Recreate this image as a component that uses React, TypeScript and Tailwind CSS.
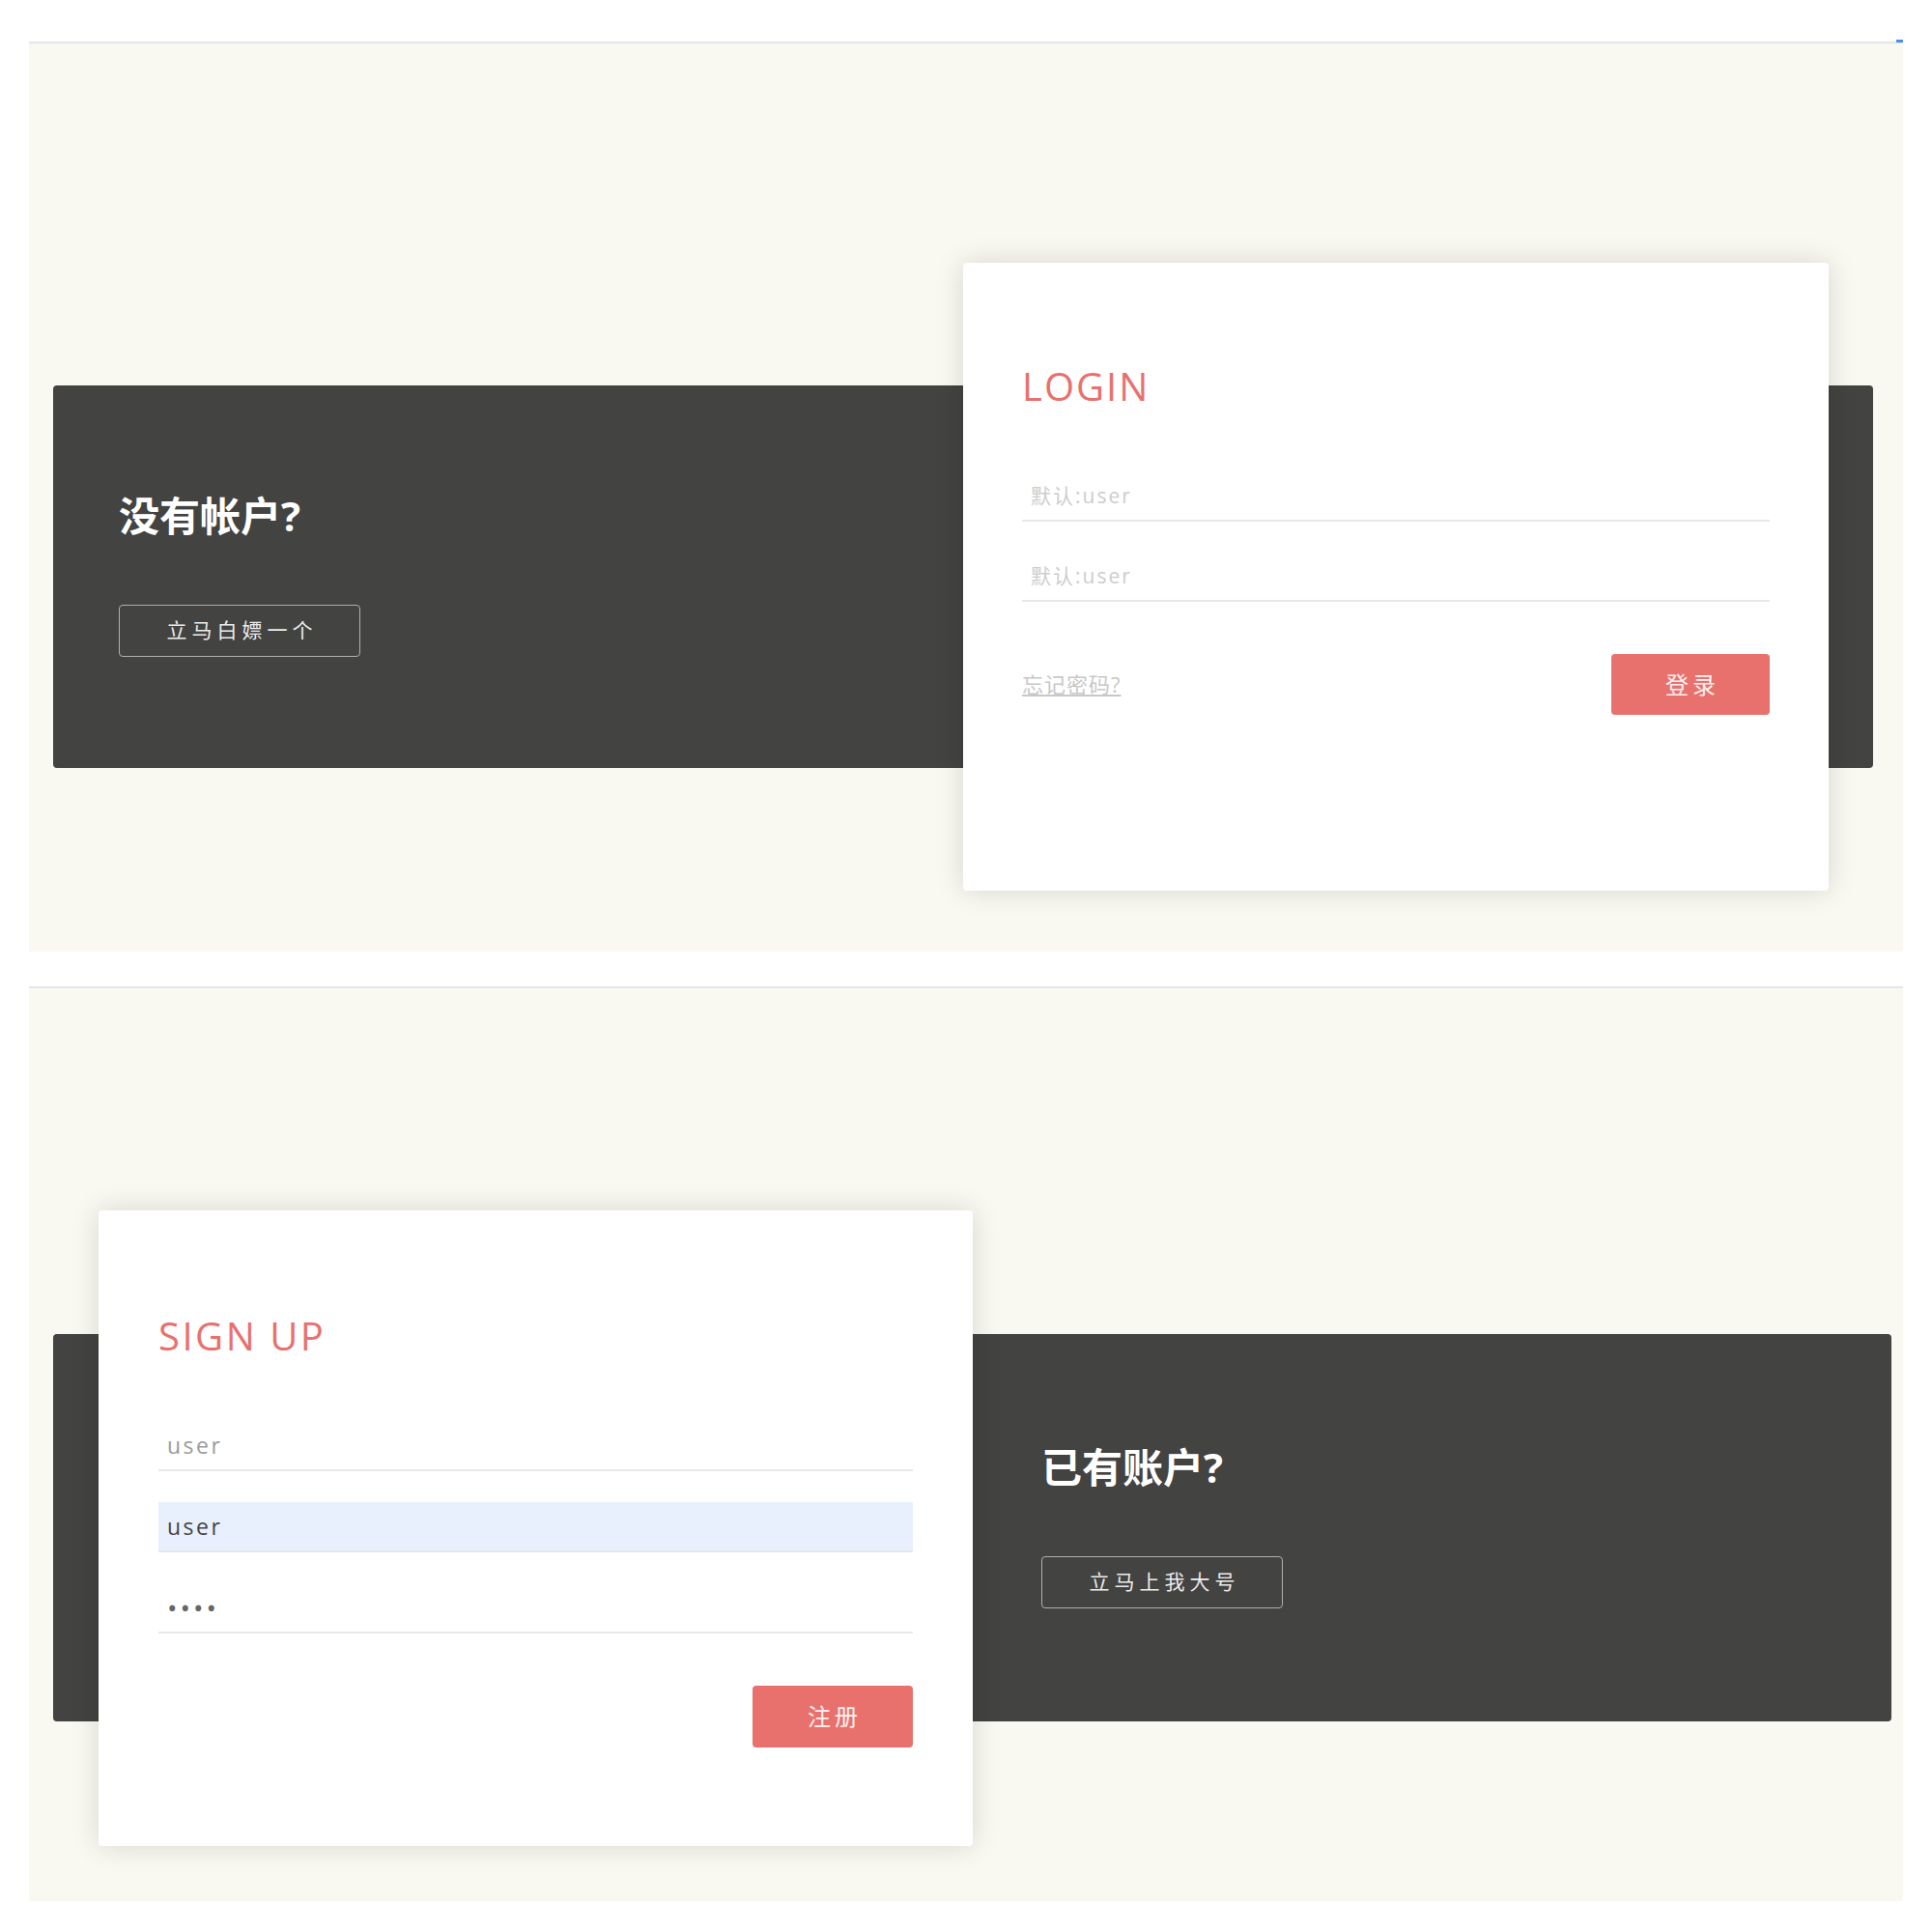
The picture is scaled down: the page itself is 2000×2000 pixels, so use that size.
import React from "react";

const FONT = "font-['Open_Sans','Noto_Sans_CJK_SC',sans-serif]";

function LoginCard() {
  return (
    <div className="h-[650px] w-[896px] shrink-0 rounded bg-white px-[61px] pt-[108px] shadow-[0_0_30px_rgba(0,0,0,0.14)]">
      <h2 className="text-[40px] font-normal leading-none tracking-[2px] text-[#e8716d]">LOGIN</h2>
      <div className="mt-[68px] flex flex-col gap-[31px]">
        <input
          className="h-[52px] w-full border-b-2 border-[#e8e8e8] bg-transparent px-[9px] text-[21px] tracking-[2px] text-[#555] outline-none placeholder:text-[#cdcdcd]"
          placeholder="默认:user"
        />
        <input
          className="h-[52px] w-full border-b-2 border-[#e8e8e8] bg-transparent px-[9px] text-[21px] tracking-[2px] text-[#555] outline-none placeholder:text-[#cdcdcd]"
          placeholder="默认:user"
        />
      </div>
      <div className="mt-[54px] flex items-center justify-between">
        <a href="#" className="text-[22px] tracking-[1px] text-[#c8c8c8] underline">
          忘记密码?
        </a>
        <button className="h-[63px] w-[164px] rounded bg-[#e8716d] pl-[4px] text-[24px] tracking-[4px] text-[#fff3f2]">
          登录
        </button>
      </div>
    </div>
  );
}

function SignupCard() {
  return (
    <div className="h-[658px] w-[905px] shrink-0 rounded bg-white px-[62px] pt-[110px] shadow-[0_0_30px_rgba(0,0,0,0.14)]">
      <h2 className="text-[40px] font-normal leading-none tracking-[2.5px] text-[#e8716d]">SIGN UP</h2>
      <div className="mt-[68px] flex flex-col gap-[32px]">
        <input
          className="h-[52px] w-full border-b-2 border-[#e8e8e8] bg-transparent px-[9px] text-[23px] tracking-[2.5px] text-[#555] outline-none placeholder:text-[#9b9b9b]"
          placeholder="user"
        />
        <input
          className="h-[52px] w-full border-b-2 border-[#e4e6ea] bg-[#e8f0fe] px-[9px] text-[23px] tracking-[2.5px] text-[#444] outline-none"
          defaultValue="user"
        />
        <input
          type="password"
          className="h-[52px] w-full border-b-2 border-[#e8e8e8] bg-transparent px-[9px] text-[28px] tracking-[3px] text-[#666] outline-none"
          defaultValue="user"
        />
      </div>
      <div className="mt-[54px] flex justify-end">
        <button className="h-[64px] w-[166px] rounded bg-[#e8716d] pl-[4px] text-[24px] tracking-[4px] text-[#fff3f2]">
          注册
        </button>
      </div>
    </div>
  );
}

function Prompt({ title, action, top }: { title: string; action: string; top: string }) {
  return (
    <div className={`flex-1 self-start ${top}`}>
      <h3 className="text-[42px] font-bold leading-none text-white">{title}</h3>
      <button className="mt-[71px] h-[54px] w-[250px] rounded border-[1.5px] border-[#b0b0b0] pl-[5px] text-[21px] tracking-[5px] text-[#ececec]">
        {action}
      </button>
    </div>
  );
}

export default function App() {
  return (
    <div className={`min-h-[2000px] w-[2000px] bg-white pt-[43px] ${FONT}`}>
      <div className="ml-[30px] w-[1940px]">
        {/* login section */}
        <section className="relative h-[942px] border-t-2 border-[#e4e6ea] bg-[#f9f8f1] pt-[354px]">
          <span className="absolute -top-[4px] right-0 h-[3px] w-[7px] bg-[#4a90f0]" />
          <div className="ml-[25px] mr-[31px] flex h-[396px] items-center rounded bg-[#434341] pl-[68px] pr-[46px]">
            <Prompt title="没有帐户?" action="立马白嫖一个" top="pt-[114px]" />
            <LoginCard />
          </div>
        </section>

        {/* signup section */}
        <section className="mt-[36px] h-[947px] border-t-2 border-[#e4e6ea] bg-[#f9f8f1] pt-[358px]">
          <div className="ml-[25px] mr-[12px] flex h-[401px] items-center gap-[71px] rounded bg-[#434341] pl-[47px]">
            <SignupCard />
            <Prompt title="已有账户?" action="立马上我大号" top="pt-[117px]" />
          </div>
        </section>
      </div>
    </div>
  );
}
